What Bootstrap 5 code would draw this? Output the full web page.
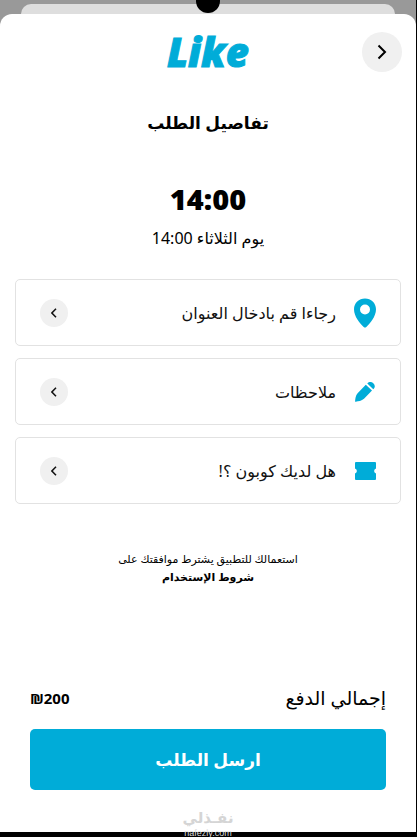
<!DOCTYPE html>
<html lang="ar" dir="rtl">
<head>
<meta charset="utf-8">
<meta name="viewport" content="width=device-width, initial-scale=1">
<title>تفاصيل الطلب</title>
<link href="https://cdn.jsdelivr.net/npm/bootstrap@5.3.0/dist/css/bootstrap.min.css" rel="stylesheet">
<style>
:root { --brand: #00acd8; }
body { font-family: "Noto Sans", "DejaVu Sans", sans-serif; color: #000; background: #999; border-right: 1px solid #000; }
.backdrop-strip { height: 14px; padding: 4px 21px 0; }
.back-sheet { height: 10px; background: #dedede; border-radius: 10px 10px 0 0; }
.camera { width: 24px; height: 24px; top: -11px; left: calc(50% - 12px); background: #000; z-index: 2; }
.sheet { background: #fff; border-radius: 12px 12px 0 0; }
.top-bar { height: 76px; }
.logo { color: var(--brand); font: italic 800 40px/40px "Open Sans", sans-serif; -webkit-text-stroke: 1px var(--brand); }
.round-btn { background: #f0f0f0; border: 0; padding: 0; color: #000; }
.back-btn { width: 40px; height: 40px; right: 14px; top: 18px; }
.page-title { font-size: 17px; line-height: 24px; margin-top: 21px; }
.time { font: 800 29px/40px "Open Sans", sans-serif; margin-top: 44px; }
.day { font-size: 16px; line-height: 20px; margin-top: 9px; }
.options { gap: 12px; margin-top: 31px; padding: 0 15px; }
.option { height: 67px; border: 1px solid #e2e2e2; border-radius: 5px; background: #fff; padding: 0 23px 0 24px; font-size: 16px; line-height: 24px; color: #111; }
.option-icon { width: 24px; margin-left: 17px; color: var(--brand); }
.go { width: 28px; height: 28px; background: #f0f0f0; }
.terms { font-size: 11px; line-height: 18px; margin-top: 46px; }
.terms a { color: #000; }
.pay { padding: 0 30px 42px; }
.pay-row { font-size: 19px; line-height: 28px; margin-bottom: 17px; }
.amount { font-size: 15px; }
.send { height: 61px; background: var(--brand); color: #fff; border: 0; border-radius: 5px; font-size: 17px; }
.foot { height: 5px; background: #000; }
.watermark { bottom: 0; left: 0; right: 0; height: 32px; pointer-events: none; }
.mark-name { font-size: 15px; line-height: 24px; color: #d5d5d5; }
.mark-site { font-family: "Liberation Sans", sans-serif; font-size: 9px; line-height: 8px; color: #ddd; }
</style>
</head>
<body class="min-vh-100 d-flex flex-column position-relative overflow-x-hidden">
<div class="camera position-absolute rounded-circle"></div>
<div class="backdrop-strip"><div class="back-sheet"></div></div>
<main class="sheet flex-grow-1 d-flex flex-column">
  <header class="top-bar position-relative d-flex justify-content-center align-items-center">
    <span class="logo" dir="ltr">Like</span>
    <button type="button" class="round-btn back-btn rounded-circle position-absolute d-flex justify-content-center align-items-center" aria-label="رجوع">
      <svg width="10" height="16" viewBox="0 0 10 16" fill="none" stroke="currentColor" stroke-width="2"><path d="M1.500 1.500 8 8l-6.500 6.500"/></svg>
    </button>
  </header>
  <h1 class="page-title fw-bold text-center mb-0">تفاصيل الطلب</h1>
  <div class="time text-center">14:00</div>
  <div class="day text-center">يوم الثلاثاء 14:00</div>
  <div class="options d-flex flex-column">
    <button type="button" class="option d-flex align-items-center w-100">
      <span class="option-icon d-flex justify-content-center"><svg width="22" height="30" viewBox="0 0 22 30" fill="currentColor"><path fill-rule="evenodd" d="M11 .5C5 .5 0 5 0 11.200 0 18.500 6 25.500 9.700 29c.9.800 1.700.800 2.600 0C16 25.500 22 18.500 22 11.200 22 5 17 .5 11 .5Zm0 6a5 5 0 1 1 0 10 5 5 0 0 1 0-10Z"/></svg></span>
      <span>رجاءا قم بادخال العنوان</span>
      <span class="go rounded-circle me-auto d-flex justify-content-center align-items-center"><svg width="6" height="10" viewBox="0 0 6 10" fill="none" stroke="currentColor" stroke-width="1.500"><path d="M5 .8.900 5 5 9.200"/></svg></span>
    </button>
    <button type="button" class="option d-flex align-items-center w-100">
      <span class="option-icon d-flex justify-content-center"><svg width="20" height="20" viewBox="0 0 20 20" fill="currentColor"><path d="M10.800 2.800 17 8.600l-8 8.200C6.500 19 3.500 19.300.8 19.700c-.5.100-.8-.2-.7-.7.3-2.500.5-5.500 2.500-7.800ZM12.300 1.400c2-2 4.700-1.500 6.200.1s2 3.700-.2 5.700Z"/></svg></span>
      <span>ملاحظات</span>
      <span class="go rounded-circle me-auto d-flex justify-content-center align-items-center"><svg width="6" height="10" viewBox="0 0 6 10" fill="none" stroke="currentColor" stroke-width="1.500"><path d="M5 .8.900 5 5 9.200"/></svg></span>
    </button>
    <button type="button" class="option d-flex align-items-center w-100">
      <span class="option-icon d-flex justify-content-center"><svg width="21" height="18" viewBox="0 0 21 18" fill="currentColor"><path d="M1 0h19q1 0 1 1v5.500a2.600 2.600 0 0 0 0 5V17q0 1-1 1H1q-1 0-1-1v-5.500a2.600 2.600 0 0 0 0-5V1Q0 0 1 0Z"/></svg></span>
      <span>هل لديك كوبون ؟!</span>
      <span class="go rounded-circle me-auto d-flex justify-content-center align-items-center"><svg width="6" height="10" viewBox="0 0 6 10" fill="none" stroke="currentColor" stroke-width="1.500"><path d="M5 .8.900 5 5 9.200"/></svg></span>
    </button>
  </div>
  <p class="terms text-center mb-0">استعمالك للتطبيق يشترط موافقتك على<br><a href="#" class="fw-bold text-decoration-none">شروط الإستخدام</a></p>
  <section class="pay mt-auto">
    <div class="pay-row d-flex justify-content-between align-items-center">
      <span>إجمالي الدفع</span>
      <span class="amount fw-bold" dir="ltr">₪200</span>
    </div>
    <button type="button" class="send w-100 fw-bold">ارسل الطلب</button>
  </section>
</main>
<div class="foot"></div>
<div class="watermark position-absolute text-center overflow-hidden">
  <div class="mark-name fw-bold">نفـذلي</div>
  <div class="mark-site">nafezly.com</div>
</div>
</body>
</html>
